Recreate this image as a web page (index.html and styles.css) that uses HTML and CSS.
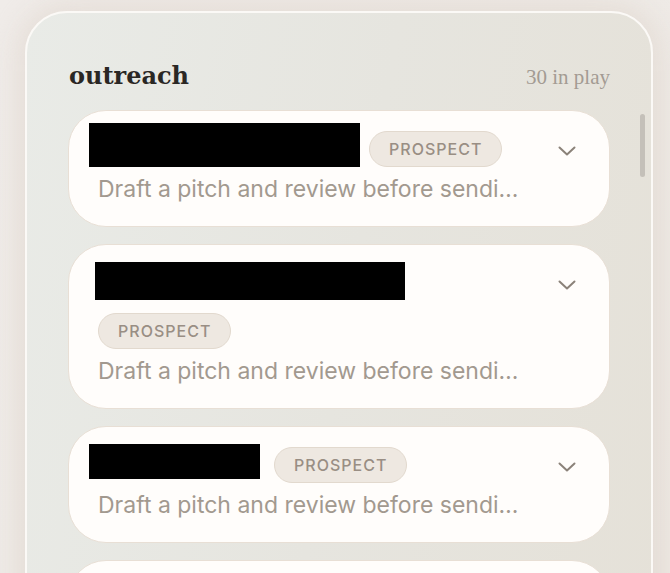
FILE: index.html
```html
<!DOCTYPE html>
<html lang="en">
<head>
<meta charset="utf-8">
<title>outreach</title>
<link rel="stylesheet" href="styles.css">
</head>
<body>
<div class="page">
  <section class="panel">
    <div class="scroll-thumb"></div>
    <header class="panel-head">
      <h1 class="title">outreach</h1>
      <span class="count">30 in play</span>
    </header>
    <div class="list">
      <article class="card">
        <div class="card-top">
          <div class="card-main">
            <span class="redact redact-1"></span>
            <span class="badge">PROSPECT</span>
          </div>
          <svg class="chev" viewBox="0 0 20 12" width="20" height="12" aria-hidden="true"><path d="M2.5 2.5 L10 9.5 L17.5 2.5" fill="none" stroke="#8b8279" stroke-width="2" stroke-linecap="round" stroke-linejoin="round"/></svg>
        </div>
        <p class="desc">Draft a pitch and review before sendi…</p>
      </article>
      <article class="card">
        <div class="card-top">
          <div class="card-main">
            <span class="redact redact-2"></span>
            <span class="badge">PROSPECT</span>
          </div>
          <svg class="chev" viewBox="0 0 20 12" width="20" height="12" aria-hidden="true"><path d="M2.5 2.5 L10 9.5 L17.5 2.5" fill="none" stroke="#8b8279" stroke-width="2" stroke-linecap="round" stroke-linejoin="round"/></svg>
        </div>
        <p class="desc">Draft a pitch and review before sendi…</p>
      </article>
      <article class="card">
        <div class="card-top">
          <div class="card-main">
            <span class="redact redact-3"></span>
            <span class="badge">PROSPECT</span>
          </div>
          <svg class="chev" viewBox="0 0 20 12" width="20" height="12" aria-hidden="true"><path d="M2.5 2.5 L10 9.5 L17.5 2.5" fill="none" stroke="#8b8279" stroke-width="2" stroke-linecap="round" stroke-linejoin="round"/></svg>
        </div>
        <p class="desc">Draft a pitch and review before sendi…</p>
      </article>
      <article class="card card-peek"></article>
    </div>
  </section>
</div>
</body>
</html>
```

FILE: styles.css
```css
html, body {
  margin: 0;
  padding: 0;
}
body {
  width: 670px;
  height: 573px;
  overflow: hidden;
  background: linear-gradient(135deg, #f0ece9 0%, #efebe7 50%, #ede8e3 100%);
  font-family: "Inter", "Liberation Sans", sans-serif;
}
.page {
  padding: 11px 17px 0 25px;
}
.panel {
  position: relative;
  width: 628px;
  height: 700px;
  border: 2px solid #fbf9f6;
  border-radius: 42px;
  background: linear-gradient(100deg, #e9ebe7 0%, #e6e5df 50%, #e5e1d8 100%);
  box-shadow: 0 0 30px 6px rgba(214, 202, 190, 0.45);
  padding: 44px 41px 0 41px;
  box-sizing: border-box;
  overflow: hidden;
}
.scroll-thumb {
  position: absolute;
  right: 6px;
  top: 101px;
  width: 5px;
  height: 63px;
  border-radius: 3px;
  background: #c4c0b9;
}
.panel-head {
  display: flex;
  justify-content: space-between;
  align-items: baseline;
  height: 36px;
  margin-bottom: 17px;
  padding-left: 1px;
}
.title {
  margin: 0;
  font-family: "DejaVu Serif", "Liberation Serif", serif;
  font-weight: bold;
  font-size: 24px;
  letter-spacing: 0;
  line-height: 37px;
  color: #2a2724;
}
.count {
  font-family: "Liberation Serif", serif;
  font-size: 21px;
  color: #a39b93;
  line-height: 37px;
}
.list {
  display: flex;
  flex-direction: column;
  gap: 17px;
}
.card {
  background: #fffdfb;
  border: 1px solid #e8dfd5;
  border-radius: 38px;
  padding: 12px 32px 22px 20px;
  box-sizing: border-box;
}
.card-peek {
  height: 120px;
}
.card-top {
  display: flex;
  gap: 20px;
  align-items: flex-start;
}
.card-main {
  flex: 1;
  display: flex;
  flex-wrap: wrap;
  align-items: center;
  column-gap: 9px;
  row-gap: 13px;
  min-height: 44px;
}
.redact {
  display: block;
  background: #000;
}
.redact-1 { width: 271px; height: 44px; }
.redact-2 { width: 310px; height: 38px; margin-left: 6px; margin-top: 5px; }
.redact-3 { width: 171px; height: 35px; margin-right: 5px; }
.badge {
  display: inline-flex;
  align-items: center;
  height: 36px;
  box-sizing: border-box;
  padding: 0 19px;
  border: 1px solid #e2d9ce;
  border-radius: 18px;
  background: #eee8e1;
  color: #998e84;
  font-size: 16px;
  font-weight: 500;
  letter-spacing: 1px;
  align-self: flex-end;
}
.card-main .redact-2 + .badge {
  margin-left: 9px;
}
.chev {
  flex: none;
  margin-top: 22px;
}
.desc {
  margin: 7px 0 0 9px;
  font-size: 23px;
  line-height: 30px;
  color: #a2998f;
  white-space: nowrap;
}
```
